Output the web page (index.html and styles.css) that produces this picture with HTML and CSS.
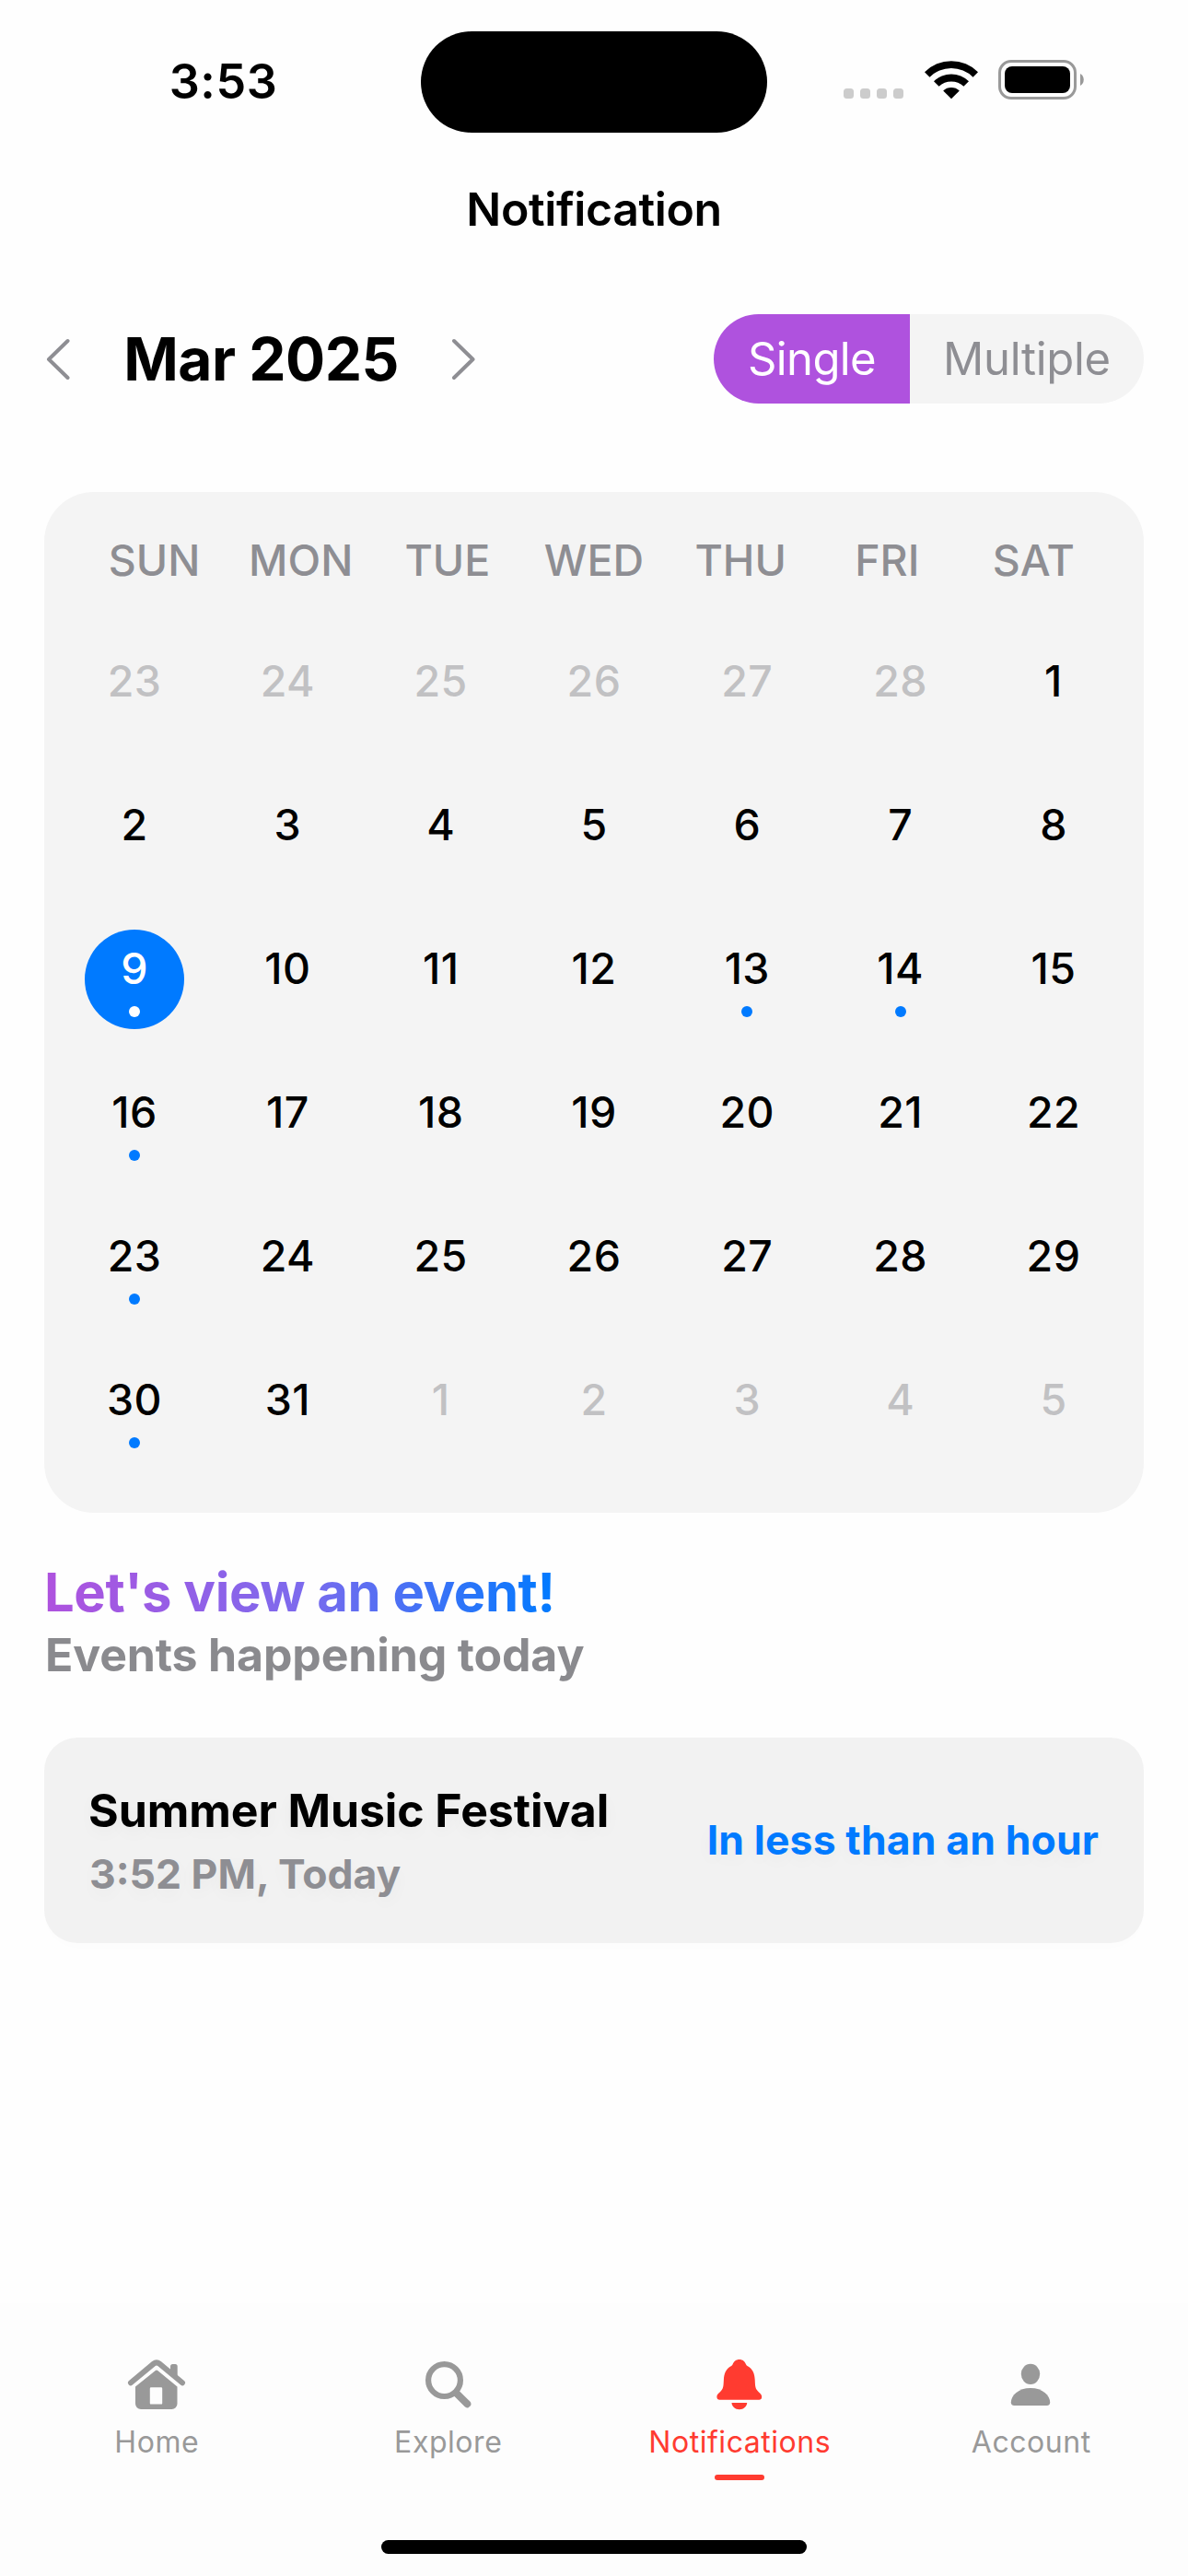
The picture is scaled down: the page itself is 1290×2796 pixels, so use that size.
FILE: index.html
```html
<!DOCTYPE html>
<html lang="en">
<head>
<meta charset="utf-8">
<title>Notification</title>
<link rel="stylesheet" href="styles.css">
</head>
<body>
<div class="screen">
  <div class="status">
    <div class="status-time">3:53</div>
    <div class="island"></div>
    <div class="status-icons">
      <div class="signal"><i></i><i></i><i></i><i></i></div>
      <svg class="wifi" width="58" height="43" viewBox="0 0 58 43">
        <path d="M0 13.2 A41 41 0 0 1 58 13.2 L52.5 18.7 A33.5 33.5 0 0 0 5.5 18.7 Z"/>
        <path d="M10 23.3 A27 27 0 0 1 48 23.3 L42.4 28.8 A19.5 19.5 0 0 0 15.6 28.8 Z"/>
        <path d="M20.2 33.4 A13 13 0 0 1 37.8 33.4 L29 42.3 Z"/>
      </svg>
      <svg class="battery" width="95" height="43" viewBox="0 0 95 43">
        <rect x="1.5" y="1.5" width="82" height="40" rx="12.5" fill="none" stroke="#999" stroke-width="3"/>
        <rect x="7" y="7" width="71" height="29" rx="8"/>
        <path d="M89 15 a7.5 7.5 0 0 1 0 13 Z" fill="#999"/>
      </svg>
    </div>
  </div>

  <header class="title">Notification</header>

  <div class="controls">
    <div class="month">
      <svg width="26" height="46" viewBox="0 0 26 46"><path d="M23.5 3 L3 23 L23.5 43"/></svg>
      <h1>Mar 2025</h1>
      <svg width="26" height="46" viewBox="0 0 26 46"><path d="M2 3 L22.5 23 L2 43"/></svg>
    </div>
    <div class="segmented">
      <div class="segment segment-single">Single</div>
      <div class="segment segment-multiple">Multiple</div>
    </div>
  </div>

  <section class="calendar">
    <div class="week"><span>SUN</span><span>MON</span><span>TUE</span><span>WED</span><span>THU</span><span>FRI</span><span>SAT</span></div>
    <div class="days">
      <div class="day out">23</div><div class="day out">24</div><div class="day out">25</div><div class="day out">26</div><div class="day out">27</div><div class="day out">28</div><div class="day">1</div>
      <div class="day">2</div><div class="day">3</div><div class="day">4</div><div class="day">5</div><div class="day">6</div><div class="day">7</div><div class="day">8</div>
      <div class="day event selected">9</div><div class="day">10</div><div class="day">11</div><div class="day">12</div><div class="day event">13</div><div class="day event">14</div><div class="day">15</div>
      <div class="day event">16</div><div class="day">17</div><div class="day">18</div><div class="day">19</div><div class="day">20</div><div class="day">21</div><div class="day">22</div>
      <div class="day event">23</div><div class="day">24</div><div class="day">25</div><div class="day">26</div><div class="day">27</div><div class="day">28</div><div class="day">29</div>
      <div class="day event">30</div><div class="day">31</div><div class="day out">1</div><div class="day out">2</div><div class="day out">3</div><div class="day out">4</div><div class="day out">5</div>
    </div>
  </section>

  <section class="events">
    <h2>Let's view an event!</h2>
    <p class="events-sub">Events happening today</p>
    <article class="card">
      <div class="card-text">
        <div class="card-name">Summer Music Festival</div>
        <div class="card-time">3:52 PM, Today</div>
      </div>
      <div class="card-when">In less than an hour</div>
    </article>
  </section>

  <nav class="tabs">
    <div class="tab-row">
      <div class="tab">
        <svg width="70" height="60" viewBox="0 0 70 60">
          <path d="M50 20 V10.5 a2.5 2.5 0 0 1 2.5-2.5 h2.7 a2.5 2.5 0 0 1 2.5 2.5 V25 Z"/>
          <path d="M7 28.3 L31.8 7.6 Q35 5 38.2 7.6 L63 28.3" fill="none" stroke="currentColor" stroke-width="6" stroke-linecap="round"/>
          <path fill-rule="evenodd" d="M33.8 15 Q35 14 36.2 15 L57.5 32.6 V51 a6 6 0 0 1-6 6 H18 a6 6 0 0 1-6-6 V32.6 Z M29 33.3 a1.2 1.2 0 0 0-1.2 1.2 V50.4 a1.2 1.2 0 0 0 1.2 1.2 H40 a1.2 1.2 0 0 0 1.2-1.2 V34.5 a1.2 1.2 0 0 0-1.2-1.2 Z"/>
        </svg>
        <span>Home</span>
      </div>
      <div class="tab">
        <svg width="70" height="60" viewBox="0 0 70 60">
          <circle cx="30.5" cy="25.6" r="17.4" fill="none" stroke="currentColor" stroke-width="6.2"/>
          <path d="M43.5 39.5 L55.3 51.2" fill="none" stroke="currentColor" stroke-width="8" stroke-linecap="round"/>
        </svg>
        <span>Explore</span>
      </div>
      <div class="tab active">
        <svg width="70" height="60" viewBox="0 0 70 60">
          <path d="M34.8 3 C38.4 3 41 5.2 42 8.3 C42.2 9 42.8 9.5 43.5 9.9 C49.5 13 51.4 18.5 51.7 25 C52 30.5 52 34 54.2 36.6 C57.2 40 59.2 41 59.2 43.8 C59.2 45.6 58 46.7 56.2 46.7 H13.4 C11.6 46.7 10.4 45.6 10.4 43.8 C10.4 41 12.4 40 15.4 36.6 C17.6 34 17.6 30.5 17.9 25 C18.2 18.5 20.1 13 26.1 9.9 C26.8 9.5 27.4 9 27.6 8.3 C28.6 5.2 31.2 3 34.8 3 Z"/>
          <path d="M26.5 50 H43.2 C43 54 39.5 57.2 34.8 57.2 S26.7 54 26.5 50 Z"/>
        </svg>
        <span>Notifications</span>
        <i class="tab-mark"></i>
      </div>
      <div class="tab">
        <svg width="70" height="60" viewBox="0 0 70 60">
          <ellipse cx="34" cy="18.8" rx="10.2" ry="11.1"/>
          <path d="M34 34 C47 34 55.2 42 55.2 49.5 C55.2 51.8 54 53 51.8 53 H16.2 C14 53 12.8 51.8 12.8 49.5 C12.8 42 21 34 34 34 Z"/>
        </svg>
        <span>Account</span>
      </div>
    </div>
    <div class="home-bar"></div>
  </nav>
</div>
</body>
</html>
```
FILE: styles.css
```css
* { box-sizing: border-box; }

body {
  margin: 0;
  background: #fefefe;
  color: #000;
  font-family: Inter, "Liberation Sans", sans-serif;
}

h1, h2, p { margin: 0; }

svg { display: block; fill: currentColor; flex: none; }

.screen {
  display: flex;
  flex-direction: column;
  width: 1290px;
  height: 2796px;
  overflow: hidden;
}

/* Status bar */
.status {
  display: flex;
  align-items: flex-start;
  height: 177px;
  padding-top: 34px;
}

.status-time {
  width: 457px;
  padding-left: 28px;
  text-align: center;
  font-size: 52px;
  font-weight: 600;
  line-height: 109px;
  letter-spacing: 0.5px;
}

.island {
  width: 376px;
  height: 110px;
  border-radius: 55px;
  background: #000;
}

.status-icons {
  display: flex;
  align-items: flex-end;
  margin: 31px 0 0 83px;
}

.signal { display: flex; gap: 7px; margin-bottom: 1px; }

.signal i {
  width: 11px;
  height: 11px;
  border-radius: 3.5px;
  background: #ccc;
}

.wifi { margin-left: 23px; }
.battery { margin-left: 22px; }

.title {
  height: 100px;
  text-align: center;
  font-size: 50px;
  font-weight: 600;
  line-height: 100px;
  letter-spacing: -0.4px;
}

/* Month switcher and mode toggle */
.controls {
  display: flex;
  align-items: center;
  justify-content: space-between;
  height: 97px;
  margin-top: 64px;
  padding: 0 48px 0 50px;
}

.month { display: flex; align-items: center; }

.month svg {
  fill: none;
  stroke: #8e8e93;
  stroke-width: 4;
  stroke-linecap: round;
  stroke-linejoin: round;
}

.month h1 {
  width: 415px;
  text-align: center;
  font-size: 64px;
  font-weight: 700;
  line-height: 80px;
  letter-spacing: -0.5px;
}

.segmented {
  display: flex;
  height: 97px;
  border-radius: 48.5px;
  overflow: hidden;
  font-size: 49px;
  font-weight: 400;
  line-height: 98px;
  text-align: center;
}

.segment-single {
  width: 213px;
  background: #af52de;
  color: #fff;
  letter-spacing: -0.6px;
}

.segment-multiple {
  width: 254px;
  background: #f4f4f4;
  color: #8e8e93;
  letter-spacing: -0.3px;
}

/* Calendar */
.calendar {
  height: 1108px;
  margin: 96px 48px 0;
  padding: 50px 40px 0;
  border-radius: 54px;
  background: #f4f4f4;
  font-size: 46.5px;
  font-weight: 500;
  line-height: 48px;
  text-align: center;
}

.week {
  display: grid;
  grid-template-columns: repeat(7, 1fr);
  margin-bottom: 65px;
  color: #8e8e93;
}

.days {
  display: grid;
  grid-template-columns: repeat(7, 108px);
  justify-content: space-between;
  row-gap: 48px;
  padding: 0 4px;
}

.day {
  display: flex;
  flex-direction: column;
  align-items: center;
  height: 108px;
  padding-top: 18px;
  letter-spacing: 0.4px;
}

.out { color: #c1c1c3; }

.event::after {
  content: "";
  width: 12px;
  height: 12px;
  margin-top: 17px;
  border-radius: 50%;
  background: #007aff;
}

.selected {
  border-radius: 50%;
  background: #007aff;
  color: #fff;
}

.selected::after { background: #fff; }

/* Events */
.events { padding: 50px 48px 0; }

.events h2 {
  width: fit-content;
  background: linear-gradient(90deg, #af52de, #7d6aed 50%, #007aff);
  background-clip: text;
  -webkit-background-clip: text;
  color: transparent;
  font-size: 58px;
  font-weight: 700;
  line-height: 72px;
  letter-spacing: -0.45px;
}

.events-sub {
  margin-top: 2px;
  padding-left: 1px;
  color: #8a8a8e;
  font-size: 50px;
  font-weight: 700;
  line-height: 60px;
  letter-spacing: -0.15px;
}

.card {
  display: flex;
  align-items: center;
  justify-content: space-between;
  height: 223px;
  margin-top: 60px;
  padding: 0 48px;
  border-radius: 36px;
  background: #f2f2f2;
  font-weight: 700;
  text-shadow: 0 6px 18px rgba(0, 0, 0, 0.04);
  box-shadow: 0 6px 18px rgba(0, 0, 0, 0.008);
}

.card-name {
  font-size: 50px;
  line-height: 60px;
  letter-spacing: -0.1px;
}

.card-time {
  margin-top: 13px;
  padding-left: 1px;
  color: #8e8e93;
  font-size: 44.5px;
  line-height: 52px;
}

.card-when {
  padding: 0 1px 2px 0;
  color: #007aff;
  font-size: 44.5px;
  line-height: 60px;
  letter-spacing: 0.13px;
}

/* Tab bar */
.tabs {
  height: 296px;
  margin-top: auto;
  background: #fdfdfd;
}

.tab-row {
  display: flex;
  height: 257px;
  padding: 58px 12px 0;
}

.tab {
  flex: 1;
  display: flex;
  flex-direction: column;
  align-items: center;
  color: #999;
  font-size: 32px;
  font-weight: 400;
  line-height: 40px;
  letter-spacing: 0.55px;
}

.tab span { margin-top: 13px; }

.active { color: #ff3b30; }

.tab-mark {
  width: 54px;
  height: 6px;
  margin-top: 15px;
  border-radius: 3px;
  background: currentColor;
}

.home-bar {
  width: 462px;
  height: 15px;
  margin: 0 auto;
  border-radius: 8px;
  background: #000;
}
```
